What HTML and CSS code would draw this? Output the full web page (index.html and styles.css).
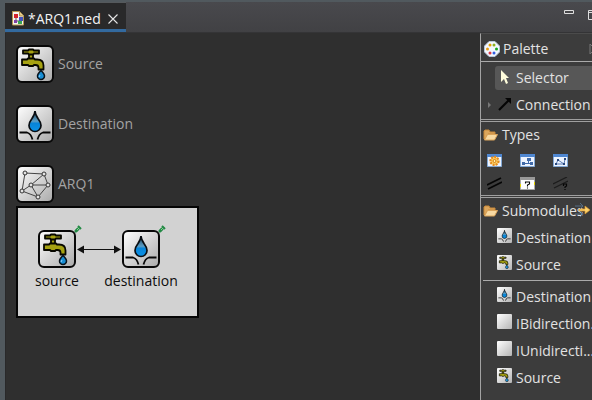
FILE: index.html
```html
<!DOCTYPE html>
<html lang="en">
<head>
<meta charset="utf-8">
<title>ARQ1.ned</title>
<link rel="stylesheet" href="styles.css">
</head>
<body>
<svg class="defs" aria-hidden="true">
  <defs>
    <linearGradient id="plate" x1="0" y1="0" x2="1" y2="1">
      <stop offset="0" stop-color="#ffffff"/><stop offset="1" stop-color="#aaaaaa"/>
    </linearGradient>
    <linearGradient id="water" x1="0" y1="0" x2="0" y2="1">
      <stop offset="0" stop-color="#183f58"/><stop offset=".5" stop-color="#5b9dc4"/><stop offset=".6" stop-color="#0784d8"/><stop offset="1" stop-color="#0b91e5"/>
    </linearGradient>
    <symbol id="tap" viewBox="0 0 38 38">
      <path d="M13 9h4v6h-4z" fill="#a6a212" stroke="#080800" stroke-width="1.800"/>
      <path d="M7 5.500h5l1-1h4l1 1h5v3h-5l-1 1h-4l-1-1H7z" fill="#a6a212" stroke="#080800" stroke-width="1.800" stroke-linejoin="round"/>
      <path d="M6 14.500h5l1-1h6l1 1h2q6.500 0 6.500 6v4h-5v-2q0-2.500-3-2.500h-1.500l-1 1h-4l-1-1H6z" fill="#a6a212" stroke="#080800" stroke-width="1.800" stroke-linejoin="round"/>
      <path d="M25 25.500q-3.500 3.500-3.500 5.500a3.500 3.500 0 0 0 7 0q0-2-3.500-5.500z" fill="#168dd4" stroke="#07121b" stroke-width="1.500"/>
      <path d="M24 30l-1 2" stroke="#8fd3ff"/>
    </symbol>
    <symbol id="sink" viewBox="0 0 38 38">
      <path d="M19 6q0 3-3 7.500-3 4-3 7a6 6 0 0 0 12 0q0-3-3-7Q19 9 19 6z" fill="url(#water)" stroke="#080d12" stroke-width="1.700"/>
      <path d="M3.500 27.500H11q4 1 5.500 7M34.500 27.500H27q-4 1-5.500 7" fill="none" stroke="#080808" stroke-width="1.800"/>
    </symbol>
    <symbol id="net" viewBox="0 0 38 38">
      <path d="M9 8l19 1 4 11-10 12-16-6L9 8M28 9L15 20h17M15 20L6 26M15 20l7 12" fill="none" stroke="#444"/>
      <g fill="#e4e4e4" stroke="#333"><circle cx="9" cy="8" r="2"/><circle cx="28" cy="9" r="2"/><circle cx="15" cy="20" r="2"/><circle cx="32" cy="20" r="2"/><circle cx="6" cy="26" r="2"/><circle cx="22" cy="32" r="2"/></g>
    </symbol>
    <symbol id="frame" viewBox="0 0 38 38">
      <rect x="1" y="1" width="36" height="36" rx="5" fill="url(#plate)" stroke="#080808" stroke-width="2"/>
    </symbol>
    <symbol id="folder" viewBox="0 0 16 14">
      <path d="M1 11V3l1-1h4l1 2h5v2H5L2 11z" fill="#dca65c" stroke="#c58739"/>
      <path d="M4.500 6.500h10l-3 5.500h-10z" fill="#f7d9a2" stroke="#dba45a"/>
    </symbol>
    <symbol id="pin" viewBox="0 0 8 8">
      <path d="M1 7l4-4" stroke="#238a45" stroke-width="2.500"/><path d="M4 1l3 3M2 4l2 2" stroke="#238a45" stroke-width="2"/><path d="M3 5l2-2" stroke="#86d394"/>
    </symbol>
  </defs>
</svg>
<header class="tabs">
  <div class="tab">
    <svg class="file" viewBox="0 0 12 15"><path d="M.5.500h7l4 4v9.500H.5z" fill="#f5f5ee" stroke="#b49550"/><path d="M7.500 1v4H11" fill="#e5c77e" stroke="#b49550"/><path d="M4 5v5h5" fill="none" stroke="#555"/><path d="M2 3h4v4H2z" fill="#d3232b"/><path d="M7 6h4v4H7z" fill="#4553bd"/><path d="M2 9h3v3H2z" fill="#8041a5"/><path d="M6 10h4v3H6z" fill="#39a452"/></svg>
    <span>*ARQ1.ned</span>
    <button class="close" aria-label="Close"><svg viewBox="0 0 10 10"><path d="M.5.500l9 9m0-9l-9 9" stroke="#e5e5e5" stroke-width="1.100"/></svg></button>
  </div>
  <div class="controls">
    <button aria-label="Minimize"><svg viewBox="0 0 10 12"><path d="M.5.500h9v3h-9z" fill="none" stroke="#ddd"/></svg></button>
    <button aria-label="Maximize"><svg viewBox="0 0 10 12"><path d="M.5.500h9v9h-9zM0 2.500h10" fill="none" stroke="#ddd"/></svg></button>
  </div>
</header>
<div class="work">
  <main class="editor">
    <div class="type"><svg><use href="#frame"/><use href="#tap"/></svg><span>Source</span></div>
    <div class="type"><svg><use href="#frame"/><use href="#sink"/></svg><span>Destination</span></div>
    <div class="type"><svg><use href="#frame"/><use href="#net"/></svg><span>ARQ1</span></div>
    <div class="canvas">
      <svg class="link" viewBox="0 0 44 10"><path d="M5 5.500h34" stroke="#111"/><path d="M0 5.500l7-4v8zM44 5.500l-7-4v8z" fill="#111"/></svg>
      <div class="node source"><svg class="icon"><use href="#frame"/><use href="#tap"/></svg><svg class="pin"><use href="#pin"/></svg><span>source</span></div>
      <div class="node destination"><svg class="icon"><use href="#frame"/><use href="#sink"/></svg><svg class="pin"><use href="#pin"/></svg><span>destination</span></div>
    </div>
  </main>
  <aside class="palette">
    <div class="palette-head">
      <svg class="palette-icon" viewBox="0 0 16 16"><path d="M5 .5h6L15.500 5v6L11 15.500H5L.5 11V5z" fill="#f3f7ff" stroke="#b9c7d8"/><g><circle cx="6" cy="4" r="1.500" fill="#e2a000"/><circle cx="10" cy="4" r="1.500" fill="#8eb020"/><circle cx="3.500" cy="8" r="1.500" fill="#e79b12"/><circle cx="12.500" cy="8" r="1.500" fill="#16a51c"/><circle cx="6" cy="12" r="1.500" fill="#dc3542"/><circle cx="10" cy="12" r="1.500" fill="#315ee0"/></g></svg>
      <span>Palette</span>
      <svg class="collapse" viewBox="0 0 6 10"><path d="M1 0v10l5-5z" fill="none" stroke="#777"/></svg>
    </div>
    <div class="tools">
      <button class="tool selected"><svg viewBox="0 0 16 16"><path d="M4 0v12l3-3 2 5 2-1-2-5h3z" fill="#fffddc"/></svg><span>Selector</span></button>
      <button class="tool connection"><svg class="expander" viewBox="0 0 4 6"><path d="M0 0v6l3-3z" fill="#777"/></svg><svg viewBox="0 0 16 16"><path d="M2 13L12 3" stroke="#050505" stroke-width="2.200"/><path d="M8 1h6v6z" fill="#050505"/></svg><span>Connection</span></button>
    </div>
    <section class="types">
      <h2><svg><use href="#folder"/></svg>Types</h2>
      <div class="type-grid">
        <button aria-label="Simple module"><svg viewBox="0 0 15 13"><path d="M.5.500h14v12H.5z" fill="#edf4ff" stroke="#83a8d5"/><path d="M0 0h15v3H0z" fill="#4f87d1"/><circle cx="7.500" cy="7" r="4" fill="#ffd467" stroke="#e58c1f" stroke-width="2.300" stroke-dasharray="2 1"/><circle cx="7.500" cy="7" r="1.500" fill="#fff3b0" stroke="#d57b10"/></svg></button>
        <button aria-label="Compound module"><svg viewBox="0 0 15 13"><path d="M.5.500h14v12H.5z" fill="#edf4ff" stroke="#83a8d5"/><path d="M0 0h15v3H0z" fill="#4f87d1"/><path d="M7 4h4v3H7zM2 8h3v3H2zM10 8h3v3h-3z" fill="#416baa"/><path d="M3 9.500h9M8.500 6v3" stroke="#416baa"/></svg></button>
        <button aria-label="Network"><svg viewBox="0 0 15 13"><path d="M.5.500h14v12H.5z" fill="#edf4ff" stroke="#83a8d5"/><path d="M0 0h15v3H0z" fill="#4f87d1"/><path d="M3 10l2-4 6 4 1-5M3 10h8" fill="none" stroke="#5679b2"/><path d="M2 9h2v2H2zM4 5h2v2H4zM10 9h2v2h-2zM11 4h2v2h-2z" fill="#28477d"/></svg></button>
        <button aria-label="Channel"><svg viewBox="0 0 15 13"><path d="M0 8l14-7M1 12l14-7" stroke="#060606" stroke-width="1.700"/></svg></button>
        <button aria-label="Module interface"><svg viewBox="0 0 15 13"><path d="M.5.500h14v12H.5z" fill="#fff" stroke="#aaa"/><path d="M0 0h15v3H0z" fill="#999"/><path d="M0 7h1v3H0zM14 5h1v3h-1z" fill="#e5d500"/><path d="M5.500 6.500V5h4v2l-2 1v1.500M7.500 10.500v1" fill="none" stroke="#080808" stroke-width="1.100"/></svg></button>
        <button aria-label="Channel interface"><svg viewBox="0 0 15 13"><path d="M0 7l14-7M1 11l14-7" stroke="#1c1c1c" stroke-width="1.200"/><path d="M10.500 9V7h3v2l-1.500 1v1M12 12v1" fill="none" stroke="#050505" stroke-width="1.200"/></svg></button>
      </div>
    </section>
    <section class="submodules">
      <h2><svg><use href="#folder"/></svg>Submodules<svg class="move" viewBox="0 0 15 14"><path d="M0 3h8m-3-3l3 3-3 3M0 11h8m-3-3l3 3-3 3" fill="none" stroke="#546c83"/><path d="M4 6h6V3l5 4-5 4V8H4z" fill="#ffd36b" stroke="#d49732" stroke-width=".7"/></svg></h2>
      <div class="group">
        <button class="item"><svg class="mini"><use href="#sink"/></svg><span>Destination</span></button>
        <button class="item"><svg class="mini"><use href="#tap"/></svg><span>Source</span></button>
      </div>
      <div class="group">
        <button class="item"><svg class="mini"><use href="#sink"/></svg><span>Destination</span></button>
        <button class="item"><svg class="mini"></svg><span>IBidirection...</span></button>
        <button class="item"><svg class="mini"></svg><span>IUnidirecti...</span></button>
        <button class="item"><svg class="mini"><use href="#tap"/></svg><span>Source</span></button>
      </div>
    </section>
  </aside>
</div>
</body>
</html>
```
FILE: styles.css
```css
* { box-sizing: border-box; }
body {
  margin: 0;
  min-height: 100vh;
  display: flex;
  flex-direction: column;
  overflow: hidden;
  background: #2f2f2f;
  border-left: 5px solid #51595e;
  color: #e2e2e2;
  font: 14px/20px "Open Sans", "Noto Sans", sans-serif;
}
svg { display: block; flex: none; }
button { border: 0; padding: 0; background: none; color: inherit; font: inherit; }
.defs { position: absolute; width: 0; height: 0; }

.tabs {
  height: 33px;
  flex: none;
  display: flex;
  justify-content: space-between;
  border-top: 2px solid #51595e;
  border-bottom: 1px solid #343436;
  background: linear-gradient(#49494d, #414144);
}
.tab {
  display: flex;
  align-items: center;
  gap: 4px;
  padding: 5px 8px 0 7px;
  background: #29292a;
  border-top: 1px solid #55595c;
  border-bottom: 3px solid #336a9f;
  color: #f4f4f4;
}
.file { width: 12px; height: 15px; }
.close { margin-left: 3px; }
.close svg { width: 10px; height: 10px; }
.controls { display: flex; align-items: flex-start; gap: 14px; padding-top: 8px; margin-right: -6px; }
.controls svg { width: 10px; height: 12px; }

.work { flex: 1; display: flex; }
.editor {
  flex: 1;
  min-width: 0;
  border-left: 1px solid #29292a;
  padding: 12px 10px;
  display: flex;
  flex-direction: column;
  align-items: flex-start;
  gap: 22px;
}
.type { display: flex; align-items: center; gap: 4px; color: #a3a3a3; }
.type svg { width: 38px; height: 38px; }
.canvas {
  position: relative;
  width: 183px;
  height: 112px;
  margin-top: -19px;
  border: 2px solid #050505;
  background: #d2d2d2;
  color: #0c0c0c;
}
.node {
  position: absolute;
  top: 22px;
  width: 84px;
  display: flex;
  flex-direction: column;
  align-items: center;
  gap: 3px;
}
.source { left: -3px; }
.destination { left: 81px; }
.icon { width: 38px; height: 38px; }
.pin { position: absolute; top: -5px; right: 17px; width: 8px; height: 8px; }
.link { position: absolute; top: 36px; left: 59px; width: 44px; height: 10px; }

.palette {
  width: 112px;
  flex: none;
  overflow: hidden;
  white-space: nowrap;
  background: #3c3c3c;
  border-left: 1px solid #a3a3a3;
  border-top: 1px solid #4b4b4b;
}
.palette-head { height: 28px; display: flex; align-items: center; gap: 3px; padding-left: 3px; padding-top: 2px; border-bottom: 1px solid #aaa; }
.palette-icon { width: 16px; height: 16px; }
.collapse { width: 6px; height: 10px; margin-left: auto; margin-right: -3px; }
.tools { padding: 4px 0; height: 60px; border-bottom: 3px double #a0a0a0; }
.tool { height: 24px; display: flex; align-items: center; gap: 3px; padding-left: 2px; margin-left: 14px; width: 100%; }
.tool svg { width: 16px; height: 16px; }
.selected { background: #575757; border-radius: 3px 0 0 3px; margin-bottom: 3px; }
.connection { position: relative; }
.tool .expander { position: absolute; left: -7px; width: 4px; height: 6px; }
h2 { margin: 0; height: 26px; display: flex; align-items: center; gap: 3px; padding-left: 2px; font: inherit; }
h2 svg { width: 16px; height: 14px; }
.types { height: 76px; border-bottom: 3px double #a0a0a0; }
.type-grid { display: grid; grid-template-columns: repeat(3, 15px); gap: 10px 18px; padding: 6px; }
.type-grid svg { width: 15px; height: 13px; }
.submodules h2 { position: relative; }
h2 .move { position: absolute; right: 2px; top: 5px; width: 15px; height: 14px; }
.group { margin-left: 2px; padding-bottom: 2px; }
.group + .group { border-top: 1px solid #aaa; padding-top: 2px; }
.item { display: flex; align-items: center; gap: 4px; height: 27px; padding-left: 14px; }
.mini { width: 15px; height: 15px; margin-bottom: 4px; background: linear-gradient(135deg, #fff, #b5b5b5); border-radius: 1px; }
```
